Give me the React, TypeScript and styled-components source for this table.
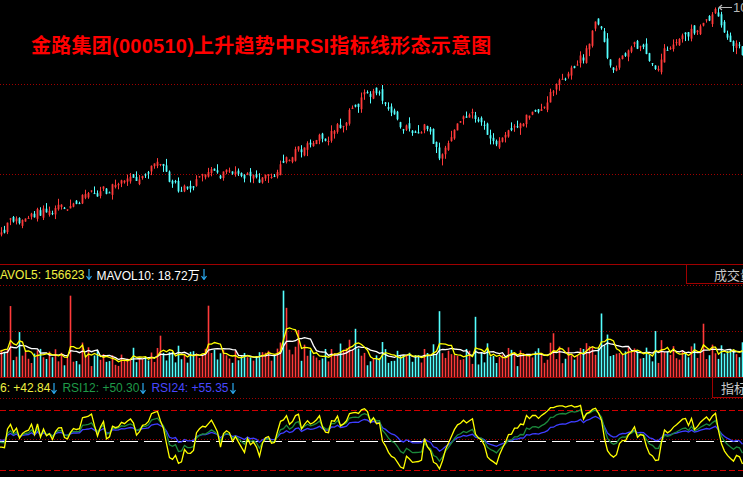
import React from 'react';
import styled, { createGlobalStyle } from 'styled-components';

const W = 743;
const PRICE_H = 264;
const VOL_H = 93;
const RSI_H = 79;

const RED = '#ff3a3a';
const CYAN = '#54ffff';
const GRID = '#a00000';
const DASH_RED = '#d00000';

function mulberry32(a: number) {
  return function () {
    a |= 0;
    a = (a + 0x6d2b79f5) | 0;
    let t = Math.imul(a ^ (a >>> 15), 1 | a);
    t = (t + Math.imul(t ^ (t >>> 7), 61 | t)) ^ t;
    return ((t ^ (t >>> 14)) >>> 0) / 4294967296;
  };
}

const KP: [number, number][] = [
  [-140, 240], [0, 228], [15, 222], [30, 214], [45, 212], [60, 205], [75, 200], [90, 197],
  [105, 192], [120, 180], [135, 178], [150, 170], [160, 168], [168, 178], [178, 190],
  [190, 182], [210, 176], [230, 176], [250, 178], [265, 182], [275, 170], [290, 155],
  [305, 148], [320, 140], [335, 130], [350, 112], [362, 98], [376, 90], [386, 105],
  [398, 122], [412, 130], [425, 127], [440, 155], [452, 140], [462, 122], [473, 110],
  [485, 125], [496, 152], [508, 132], [522, 120], [538, 114], [548, 105], [556, 80],
  [570, 72], [585, 55], [596, 25], [602, 30], [608, 55], [616, 70], [626, 52], [636, 42],
  [646, 55], [656, 68], [666, 50], [680, 38], [694, 30], [706, 18], [716, 10], [722, 28],
  [730, 44], [745, 55],
];

function target(x: number) {
  if (x <= KP[0][0]) return KP[0][1];
  for (let i = 1; i < KP.length; i++) {
    if (x <= KP[i][0]) {
      const [x0, y0] = KP[i - 1];
      const [x1, y1] = KP[i];
      return y0 + ((y1 - y0) * (x - x0)) / (x1 - x0);
    }
  }
  return KP[KP.length - 1][1];
}

type Candle = { x: number; o: number; c: number; h: number; l: number; v: number };

const rand = mulberry32(20240510);
const candles: Candle[] = [];
{
  let n = 0;
  let prev = target(-140);
  for (let i = 0; i < 294; i++) {
    const x = 1.5 + (i - 46) * 3;
    n = 0.3 * n + (rand() - 0.5) * 11;
    const c = target(x) + n;
    const o = prev + (rand() - 0.5) * 7;
    const top = Math.min(o, c);
    const bot = Math.max(o, c);
    const h = top - rand() * rand() * 8;
    const l = bot + rand() * rand() * 8;
    const v = 10 + Math.abs(c - o) * 0.9 + rand() * 17;
    candles.push({ x, o, c, h, l, v });
    prev = c;
  }
  const spikes: [number, number][] = [
    [10, 45], [19, 20], [70, 55], [160, 22], [210, 48], [284, 70], [287, 45], [300, 30],
    [355, 30], [340, 20], [440, 36], [475, 30], [553, 28], [602, 48], [656, 20], [705, 26],
  ];
  spikes.forEach(([sx, add]) => {
    let best = 0;
    candles.forEach((c, i) => {
      if (Math.abs(c.x - sx) < Math.abs(candles[best].x - sx)) best = i;
    });
    candles[best].v += add;
  });
}

function ma(N: number) {
  return candles.map((_, i) => {
    let s = 0;
    let k = 0;
    for (let j = Math.max(0, i - N + 1); j <= i; j++) {
      s += candles[j].v;
      k++;
    }
    return s / k;
  });
}

function rsi(N: number) {
  let su = 0;
  let sa = 0;
  return candles.map((c, i) => {
    if (i === 0) return 50;
    const d = candles[i - 1].c - c.c;
    su = (Math.max(d, 0) + (N - 1) * su) / N;
    sa = (Math.abs(d) + (N - 1) * sa) / N;
    return sa > 0 ? (su / sa) * 100 : 50;
  });
}

const visible = (x: number) => x > -6 && x < W + 6;

function linePoints(vals: number[], toY: (v: number) => number) {
  return candles
    .map((c, i) => (visible(c.x) ? `${c.x.toFixed(1)},${toY(vals[i]).toFixed(1)}` : ''))
    .filter(Boolean)
    .join(' ');
}

const ma5 = ma(5);
const ma10 = ma(10);
const rsi6 = rsi(6);
const rsi12 = rsi(12);
const rsi24 = rsi(24);

const volY = (v: number) => Math.max(1, VOL_H - v);
const rsiY = (r: number) => 43 - (r - 50) * 0.75;

const GlobalStyle = createGlobalStyle`
  html, body { margin: 0; padding: 0; background: #000; }
`;

const Screen = styled.div`
  width: ${W}px;
  height: 477px;
  background: #000;
  overflow: hidden;
  display: flex;
  flex-direction: column;
  font-family: 'Liberation Sans', 'Noto Sans CJK SC', sans-serif;
`;

const Pane = styled.div<{ $h: number }>`
  position: relative;
  height: ${(p) => p.$h}px;
  flex: none;
`;

const ChartSvg = styled.svg`
  display: block;
`;

const Title = styled.div`
  position: absolute;
  left: 31px;
  top: 36px;
  color: #ff0000;
  font-size: 20px;
  line-height: 20px;
  letter-spacing: 0.25px;
  font-weight: bold;
  font-family: 'Liberation Sans', 'Noto Sans CJK SC', sans-serif;
  white-space: nowrap;
`;

const PriceTag = styled.div`
  position: absolute;
  left: 718px;
  top: 0;
  height: 14px;
  display: flex;
  align-items: center;
  gap: 1px;
  color: #b8b8b8;
  font-size: 13px;
  white-space: nowrap;
`;

const Divider = styled.div`
  height: 1px;
  background: ${GRID};
  flex: none;
`;

const LegendRow = styled.div<{ $h: number }>`
  height: ${(p) => p.$h}px;
  display: flex;
  align-items: stretch;
  flex: none;
`;

const Legend = styled.div<{ $shift: number }>`
  flex: 1;
  min-width: 0;
  display: flex;
  align-items: center;
  margin-left: ${(p) => p.$shift}px;
  font-size: 12px;
  white-space: nowrap;
`;

const LegendItem = styled.span<{ $color: string }>`
  color: ${(p) => p.$color};
  display: inline-flex;
  align-items: center;
  margin-right: 5px;
`;

const Tab = styled.div<{ $w: number; $pad: number }>`
  box-sizing: border-box;
  flex: none;
  width: ${(p) => p.$w}px;
  border-left: 1px solid ${GRID};
  border-bottom: 1px solid ${GRID};
  padding-left: ${(p) => p.$pad}px;
  display: flex;
  align-items: center;
  overflow: hidden;
  white-space: nowrap;
  color: #c8c8c8;
  font-size: 13px;
  font-family: 'Noto Sans CJK SC', sans-serif;
`;

const ArrowDown = () => (
  <svg width="6" height="11" viewBox="0 0 6 11" style={{ marginLeft: 1 }}>
    <path d="M3 0 V10 M0.5 7 L3 10.5 L5.5 7" stroke="#2aa8ee" strokeWidth="1.2" fill="none" />
  </svg>
);

const DottedLine = ({ y, color = GRID }: { y: number; color?: string }) => (
  <line x1={0} x2={W} y1={y + 0.5} y2={y + 0.5} stroke={color} strokeWidth={1} strokeDasharray="1 2" />
);

const DashedLine = ({ y, color, dash }: { y: number; color: string; dash: string }) => (
  <line x1={0} x2={W} y1={y + 0.5} y2={y + 0.5} stroke={color} strokeWidth={1.2} strokeDasharray={dash} />
);

const PriceChart = () => (
  <ChartSvg width={W} height={PRICE_H}>
    <DottedLine y={84} />
    <DottedLine y={174} />
    {candles.filter((c) => visible(c.x)).map((c, i) => {
      const up = c.c <= c.o;
      const col = up ? RED : CYAN;
      const top = Math.min(c.o, c.c);
      const bot = Math.max(c.o, c.c);
      return (
        <g key={i}>
          <line x1={c.x} x2={c.x} y1={c.h} y2={c.l} stroke={col} strokeWidth={1} />
          <rect x={c.x - 0.9} y={top} width={1.8} height={Math.max(1, bot - top)} fill={col} />
        </g>
      );
    })}
  </ChartSvg>
);

const VolumeChart = () => (
  <ChartSvg width={W} height={VOL_H}>
    <DottedLine y={1} />
    <DottedLine y={47} />
    {candles.filter((c) => visible(c.x)).map((c, i) => {
      const col = c.c <= c.o ? RED : CYAN;
      const y = volY(c.v);
      return <rect key={i} x={c.x - 0.8} y={y} width={1.6} height={VOL_H - y} fill={col} />;
    })}
    <polyline points={linePoints(ma10, volY)} fill="none" stroke="#ffffff" strokeWidth={1.3} />
    <polyline points={linePoints(ma5, volY)} fill="none" stroke="#ffff00" strokeWidth={1.3} />
  </ChartSvg>
);

const RsiChart = () => (
  <ChartSvg width={W} height={RSI_H}>
    <DottedLine y={0} />
    <DashedLine y={12} color={DASH_RED} dash="6 3" />
    <DottedLine y={41} />
    <DashedLine y={43} color="#ffffff" dash="18 6" />
    <DashedLine y={72} color={DASH_RED} dash="6 3" />
    <polyline points={linePoints(rsi24, rsiY)} fill="none" stroke="#3d3dff" strokeWidth={1.3} />
    <polyline points={linePoints(rsi12, rsiY)} fill="none" stroke="#1c8a3c" strokeWidth={1.3} />
    <polyline points={linePoints(rsi6, rsiY)} fill="none" stroke="#ffff00" strokeWidth={1.3} />
  </ChartSvg>
);

export default function App() {
  return (
    <>
      <GlobalStyle />
      <Screen>
        <Pane $h={PRICE_H}>
          <PriceChart />
          <Title>金路集团(000510)上升趋势中RSI指标线形态示意图</Title>
          <PriceTag>
            <svg width="14" height="7" viewBox="0 0 14 7">
              <path d="M1 3.5 H14 M4 1 L1 3.5 L4 6" stroke="#b8b8b8" strokeWidth="1.2" fill="none" />
            </svg>
            <span>10.86</span>
          </PriceTag>
        </Pane>
        <Divider />
        <LegendRow $h={19}>
          <Legend $shift={-10}>
            <LegendItem $color="#f0f040">MAVOL5: 156623<ArrowDown /></LegendItem>
            <LegendItem $color="#ffffff">MAVOL10: 18.72万<ArrowDown /></LegendItem>
          </Legend>
          <Tab $w={57} $pad={27}>成交量</Tab>
        </LegendRow>
        <Pane $h={VOL_H}>
          <VolumeChart />
        </Pane>
        <Divider />
        <LegendRow $h={20}>
          <Legend $shift={-20}>
            <LegendItem $color="#f0f040">RSI6: +42.84<ArrowDown /></LegendItem>
            <LegendItem $color="#1f9a48">RSI12: +50.30<ArrowDown /></LegendItem>
            <LegendItem $color="#4848ff">RSI24: +55.35<ArrowDown /></LegendItem>
          </Legend>
          <Tab $w={31} $pad={8}>指标</Tab>
        </LegendRow>
        <Pane $h={RSI_H}>
          <RsiChart />
        </Pane>
      </Screen>
    </>
  );
}
